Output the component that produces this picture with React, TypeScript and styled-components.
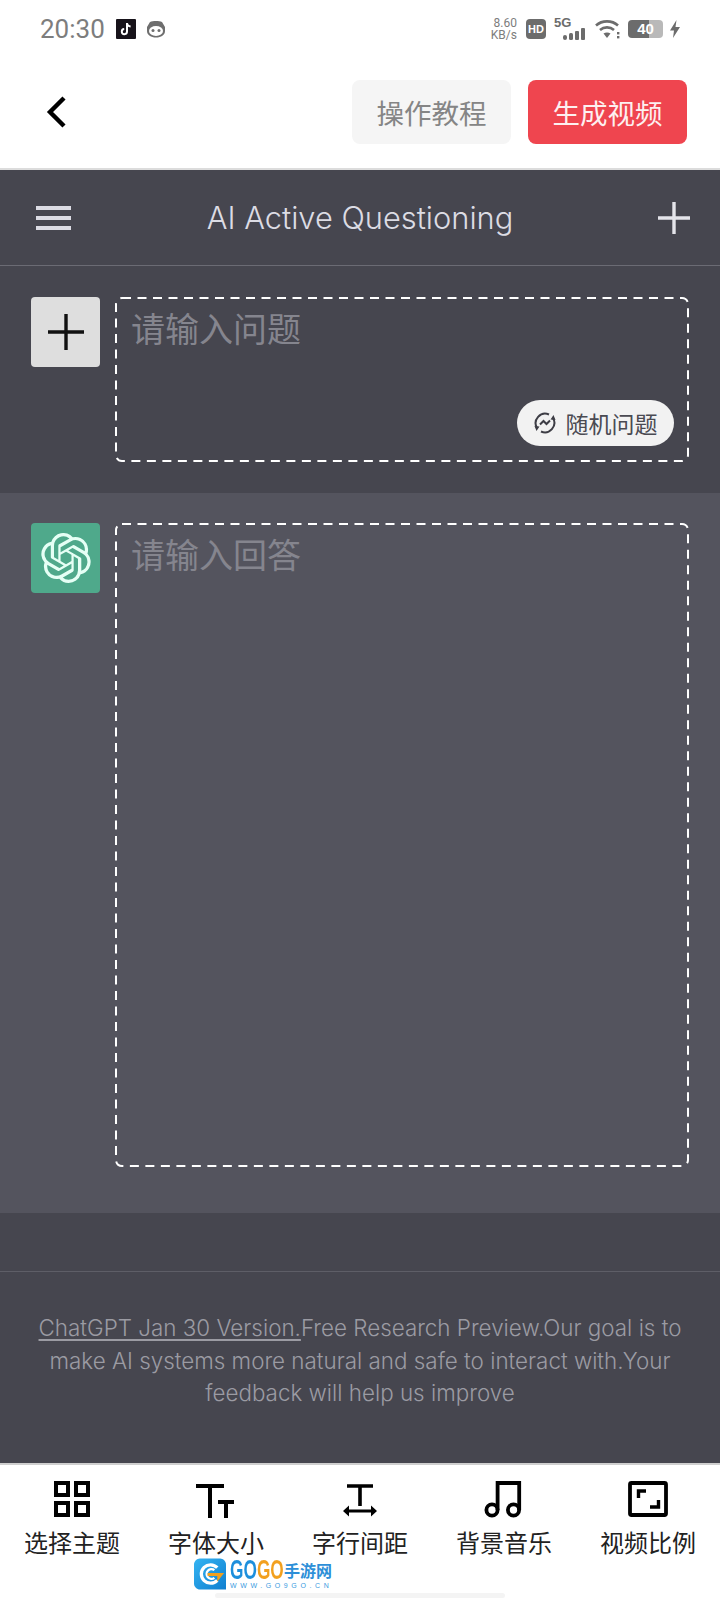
import React from "react"
import styled, { createGlobalStyle } from "styled-components"
import { SiOpenai } from "react-icons/si"

const cjk = `"Noto Sans CJK SC", "Noto Sans", sans-serif`

const GlobalStyle = createGlobalStyle`
  html, body { margin: 0; padding: 0; background: #fff; }
  * { box-sizing: border-box; }
  body { font-family: Inter, ${cjk}; }
`

const Page = styled.div`
  width: 720px;
  height: 1600px;
  display: flex;
  flex-direction: column;
  overflow: hidden;
  background: #fff;
`

const StatusBar = styled.div`
  height: 58px;
  flex-shrink: 0;
  display: flex;
  align-items: center;
  justify-content: space-between;
  padding: 0 40px 0 40px;
  color: #7d7d7d;
`

const StatusSide = styled.div`
  display: flex;
  align-items: center;
`

const Time = styled.span`
  font-family: Roboto, sans-serif;
  font-size: 26px;
  width: 76px;
`

const Speed = styled.div`
  display: flex;
  flex-direction: column;
  align-items: flex-end;
  font-family: Roboto, sans-serif;
  font-size: 12px;
  line-height: 12px;
  margin-right: 9px;
  width: 28px;
`

const HdBadge = styled.span`
  width: 20px;
  height: 20px;
  border-radius: 4px;
  background: #6c6c6c;
  color: #fff;
  font: 700 11px/20px "Liberation Sans", sans-serif;
  text-align: center;
  margin-right: 8px;
`

const SignalBox = styled.div`
  position: relative;
  width: 32px;
  height: 22px;
  margin-right: 9px;
`

const FiveG = styled.span`
  position: absolute;
  left: 0;
  top: -2px;
  font: 700 13px/14px "Liberation Sans", sans-serif;
  color: #6c6c6c;
`

const Battery = styled.div`
  position: relative;
  width: 35px;
  height: 18px;
  margin: 0 7px 0 7px;
  border-radius: 4px;
  background: linear-gradient(90deg, #6c6c6c 0 60%, #b9b9b9 60% 100%);
  color: #fff;
  font: 700 15px/18px "Liberation Sans", sans-serif;
  text-align: center;
`

const Header = styled.header`
  height: 112px;
  flex-shrink: 0;
  display: flex;
  align-items: flex-start;
  justify-content: space-between;
  padding: 22px 33px 0 44px;
  border-bottom: 2px solid #dcdcdc;
`

const BackButton = styled.svg`
  margin-top: 16px;
`

const HeaderActions = styled.div`
  display: flex;
  gap: 17px;
`

const ActionButton = styled.div<{ $primary?: boolean }>`
  width: 159px;
  height: 64px;
  display: flex;
  align-items: center;
  justify-content: center;
  border-radius: 8px;
  font-family: ${cjk};
  font-size: 27.5px;
  background: ${p => (p.$primary ? "#ef454f" : "#f5f5f5")};
  color: ${p => (p.$primary ? "#fdf0f0" : "#858585")};
`

const TopBar = styled.div`
  height: 96px;
  flex-shrink: 0;
  display: grid;
  grid-template-columns: 1fr auto 1fr;
  align-items: center;
  padding: 0 30px;
  background: #46464f;
  border-bottom: 1px solid #6b6b74;
`

const MenuIcon = styled.svg`
  margin-left: 6px;
`

const TopTitle = styled.h1`
  margin: 0;
  font-family: Inter, sans-serif;
  font-weight: 300;
  font-size: 30.8px;
  color: #dcdce4;
`

const TopPlus = styled.svg`
  justify-self: end;
`

const ChatSection = styled.section<{ $answer?: boolean }>`
  height: ${p => (p.$answer ? 720 : 227)}px;
  flex-shrink: 0;
  display: flex;
  align-items: flex-start;
  gap: 15px;
  padding: ${p => (p.$answer ? 30 : 31)}px 31px 0;
  background: ${p => (p.$answer ? "#54545e" : "#46464f")};
`

const Avatar = styled.div<{ $bot?: boolean }>`
  width: 69px;
  height: 70px;
  flex-shrink: 0;
  display: flex;
  align-items: center;
  justify-content: center;
  border-radius: 4px;
  background: ${p => (p.$bot ? "#4fa98b" : "#dedede")};
  color: ${p => (p.$bot ? "#e6fff5" : "#111")};
`

const InputBox = styled.div<{ $height: number }>`
  position: relative;
  flex: 1;
  height: ${p => p.$height}px;
  padding: 11px 16px 0 16px;
`

const DashedFrame = styled.svg`
  position: absolute;
  inset: 0;
  width: 100%;
  height: 100%;
`

const DashedRect = styled.rect`
  x: 1px;
  y: 1px;
  width: calc(100% - 2px);
  height: calc(100% - 2px);
  rx: 6px;
  fill: none;
  stroke: #fff;
  stroke-width: 2;
  stroke-dasharray: 9 6.5;
`

const Placeholder = styled.div`
  font-family: ${cjk};
  font-size: 34px;
  line-height: 40px;
  color: #85858e;
`

const RandomPill = styled.div`
  position: absolute;
  right: 15px;
  bottom: 16px;
  width: 157px;
  height: 46px;
  display: flex;
  align-items: center;
  justify-content: center;
  gap: 10px;
  border-radius: 23px;
  background: #f2f2f2;
  color: #4a4a52;
  font-family: ${cjk};
  font-size: 23px;
`

const Spacer = styled.div`
  height: 59px;
  flex-shrink: 0;
  background: #46464f;
  border-bottom: 1px solid #5e5e67;
`

const Footer = styled.footer`
  height: 193px;
  flex-shrink: 0;
  padding: 40px 30px 0;
  background: #46464f;
  border-bottom: 2px solid #cfcfcf;
  text-align: center;
  font-family: Inter, sans-serif;
  font-weight: 300;
  font-size: 22.4px;
  line-height: 32.5px;
  color: #9b9ba3;
`

const VersionLink = styled.span`
  text-decoration: underline;
  text-underline-offset: 3px;
`

const BottomNav = styled.nav`
  position: relative;
  flex: 1;
  display: grid;
  grid-template-columns: repeat(5, 144px);
  padding-top: 14px;
`

const NavItem = styled.div`
  display: flex;
  flex-direction: column;
  align-items: center;
  gap: 8px;
`

const NavLabel = styled.span`
  font-family: ${cjk};
  font-size: 24px;
  line-height: 30px;
  color: #222;
`

const Watermark = styled.div`
  position: absolute;
  left: 194px;
  top: 93px;
  width: 137px;
  height: 32px;
  display: flex;
  gap: 4px;
`

const BrandText = styled.div`
  display: flex;
  flex-direction: column;
  width: 101px;
`

const BrandRow = styled.div`
  display: flex;
  height: 24px;
  align-items: center;
`

const BrandLatin = styled.span`
  display: inline-block;
  width: 84px;
  margin-right: -30px;
  font: 700 27px/24px "Liberation Sans", sans-serif;
  transform: scaleX(0.64);
  transform-origin: left center;
  white-space: nowrap;
  background: linear-gradient(90deg, #1d8fdc 0 50%, #f2a01e 50% 100%);
  -webkit-background-clip: text;
  background-clip: text;
  color: transparent;
`

const BrandCjk = styled.span`
  font: 700 16px/24px ${cjk};
  color: #2d8fd8;
  white-space: nowrap;
`

const BrandUrl = styled.span`
  font: 400 7px/8px "Liberation Sans", sans-serif;
  letter-spacing: 3.6px;
  color: #3a9be0;
  white-space: nowrap;
`

const HomeBar = styled.div`
  position: absolute;
  left: 215px;
  top: 128px;
  width: 290px;
  height: 5px;
  border-radius: 3px;
  background: #f4f4f4;
`

const navIcons = [
  <g fill="none" stroke="#000" strokeWidth="4">
    <rect x="4" y="4" width="12" height="12" />
    <rect x="24" y="4" width="12" height="12" />
    <rect x="4" y="24" width="12" height="12" />
    <rect x="24" y="24" width="12" height="12" />
  </g>,
  <g fill="none" stroke="#000" strokeWidth="4">
    <path d="M0 7H28M14 7V39" />
    <path d="M22 23H38M30 23V39" />
  </g>,
  <g>
    <path d="M7 7H33M20 7V27" fill="none" stroke="#000" strokeWidth="3.6" />
    <path d="M8 32H32" fill="none" stroke="#000" strokeWidth="3" />
    <path d="M3 32L9 26.5V37.5ZM37 32L31 26.5V37.5Z" fill="#000" />
  </g>,
  <g fill="none" stroke="#000" strokeWidth="3.8">
    <circle cx="8" cy="31" r="5.6" />
    <circle cx="29.5" cy="31" r="5.6" />
    <path d="M13.6 31V4H35.2V31" />
  </g>,
  <g fill="none" stroke="#000" strokeWidth="3.8">
    <rect x="2" y="4" width="36" height="32" rx="1.5" />
    <path d="M18 12H10.5V19" strokeWidth="3.4" />
    <path d="M22 28H30.5V21" strokeWidth="3.4" />
  </g>,
]

const navLabels = ["选择主题", "字体大小", "字行间距", "背景音乐", "视频比例"]

function App() {
  return (
    <Page>
      <GlobalStyle />
      <StatusBar>
        <StatusSide>
          <Time>20:30</Time>
          <svg width="20" height="20" viewBox="0 0 20 20">
            <rect width="20" height="20" rx="1" fill="#17131a" />
            <path d="M11 4V12.6A2.6 2.6 0 1 1 8.2 10M11 4.4C11.4 6.4 12.6 7.4 14.6 7.6" fill="none" stroke="#fff" strokeWidth="2" />
          </svg>
          <svg width="20" height="18" viewBox="0 0 20 18" style={{ marginLeft: 10 }}>
            <path d="M1 7L4 2C7 .8 13 .8 16 2L19 7V11C19 15 15 17.5 10 17.5S1 15 1 11Z" fill="#6e6e6e" />
            <ellipse cx="10" cy="11" rx="7" ry="5" fill="#fff" />
            <circle cx="7" cy="10.5" r="1.5" fill="#6e6e6e" />
            <circle cx="13" cy="10.5" r="1.5" fill="#6e6e6e" />
          </svg>
        </StatusSide>
        <StatusSide>
          <Speed>
            <span>8.60</span>
            <span>KB/s</span>
          </Speed>
          <HdBadge>HD</HdBadge>
          <SignalBox>
            <FiveG>5G</FiveG>
            <svg width="32" height="22" viewBox="0 0 32 22">
              <g fill="#6c6c6c">
                <rect x="9" y="17" width="4" height="5" rx="2" />
                <rect x="15" y="15" width="4" height="7" rx="1.5" />
                <rect x="21" y="13" width="4" height="9" rx="1" />
                <rect x="27" y="10" width="4" height="12" rx="1" />
              </g>
            </svg>
          </SignalBox>
          <svg width="26" height="20" viewBox="0 0 26 20">
            <g fill="none" stroke="#6c6c6c" strokeWidth="2.6">
              <path d="M1 6.5C7 1 17 1 23 6.5" />
              <path d="M5 11C9 7.5 15 7.5 19 11" />
            </g>
            <path d="M8.5 14.5C10.5 13 13.5 13 15.5 14.5L12 19Z" fill="#6c6c6c" />
            <rect x="22" y="13" width="2.4" height="2.4" fill="#6c6c6c" />
            <rect x="22" y="17" width="2.4" height="2.4" fill="#6c6c6c" />
          </svg>
          <Battery>40</Battery>
          <svg width="10" height="18" viewBox="0 0 10 18">
            <path d="M6.5 0L0 10.5H4L3 18L10 7H5.5Z" fill="#6c6c6c" />
          </svg>
        </StatusSide>
      </StatusBar>

      <Header>
        <BackButton width="24" height="32" viewBox="0 0 24 32">
          <path d="M20 2L6 16L20 30" fill="none" stroke="#000" strokeWidth="4.4" />
        </BackButton>
        <HeaderActions>
          <ActionButton>操作教程</ActionButton>
          <ActionButton $primary>生成视频</ActionButton>
        </HeaderActions>
      </Header>

      <TopBar>
        <MenuIcon width="35" height="24" viewBox="0 0 35 24">
          <path d="M0 2H35M0 12H35M0 22H35" stroke="#dcdce4" strokeWidth="4" />
        </MenuIcon>
        <TopTitle>AI Active Questioning</TopTitle>
        <TopPlus width="32" height="32" viewBox="0 0 32 32">
          <path d="M16 0V32M0 16H32" stroke="#e4e4ea" strokeWidth="3.4" />
        </TopPlus>
      </TopBar>

      <ChatSection>
        <Avatar>
          <svg width="36" height="36" viewBox="0 0 36 36">
            <path d="M18 0V36M0 18H36" stroke="#111" strokeWidth="3.4" />
          </svg>
        </Avatar>
        <InputBox $height={165}>
          <DashedFrame><DashedRect /></DashedFrame>
          <Placeholder>请输入问题</Placeholder>
          <RandomPill>
            <svg width="22" height="22" viewBox="0 0 22 22">
              <g fill="none" stroke="#3d3d45" strokeWidth="2">
                <path d="M3 16A9.5 9.5 0 0 1 15 2.5" />
                <path d="M19 6A9.5 9.5 0 0 1 7 19.5" />
                <path d="M6 12.5L9.5 9L12.5 12L16 8.5" />
              </g>
              <path d="M0.5 14L5.5 14.5L2.5 19ZM21.5 8L16.5 7.5L19.5 3Z" fill="#3d3d45" />
            </svg>
            <span>随机问题</span>
          </RandomPill>
        </InputBox>
      </ChatSection>

      <ChatSection $answer>
        <Avatar $bot>
          <SiOpenai size={50} />
        </Avatar>
        <InputBox $height={644}>
          <DashedFrame><DashedRect /></DashedFrame>
          <Placeholder>请输入回答</Placeholder>
        </InputBox>
      </ChatSection>

      <Spacer />

      <Footer>
        <VersionLink>ChatGPT Jan 30 Version.</VersionLink>
        Free Research Preview.Our goal is to make AI systems more natural and safe to interact with.Your feedback will help us improve
      </Footer>

      <BottomNav>
        {navLabels.map((label, i) => (
          <NavItem key={label}>
            <svg width="40" height="40" viewBox="0 0 40 40">{navIcons[i]}</svg>
            <NavLabel>{label}</NavLabel>
          </NavItem>
        ))}
        <Watermark>
          <svg width="33" height="32" viewBox="0 0 33 32">
            <defs>
              <linearGradient id="gogoBlue" x1="0" y1="0" x2="1" y2="1">
                <stop offset="0" stopColor="#35b4f2" />
                <stop offset="1" stopColor="#0f7fd0" />
              </linearGradient>
            </defs>
            <path d="M6 0H27C30 0 33 3 33 6V32H6C3 32 0 29 0 26V6C0 3 3 0 6 0Z" fill="url(#gogoBlue)" />
            <path d="M24 9.5A9.5 9.5 0 1 0 24 22.5" fill="none" stroke="#fff" strokeWidth="3.4" />
            <path d="M21 12A5 5 0 1 0 21 20" fill="none" stroke="#fff" strokeWidth="2.4" />
            <path d="M14 15H31L24 24V18H14Z" fill="#f2a01e" />
          </svg>
          <BrandText>
            <BrandRow>
              <BrandLatin>GOGO</BrandLatin>
              <BrandCjk>手游网</BrandCjk>
            </BrandRow>
            <BrandUrl>WWW.GO9GO.CN</BrandUrl>
          </BrandText>
        </Watermark>
        <HomeBar />
      </BottomNav>
    </Page>
  )
}

export default App
